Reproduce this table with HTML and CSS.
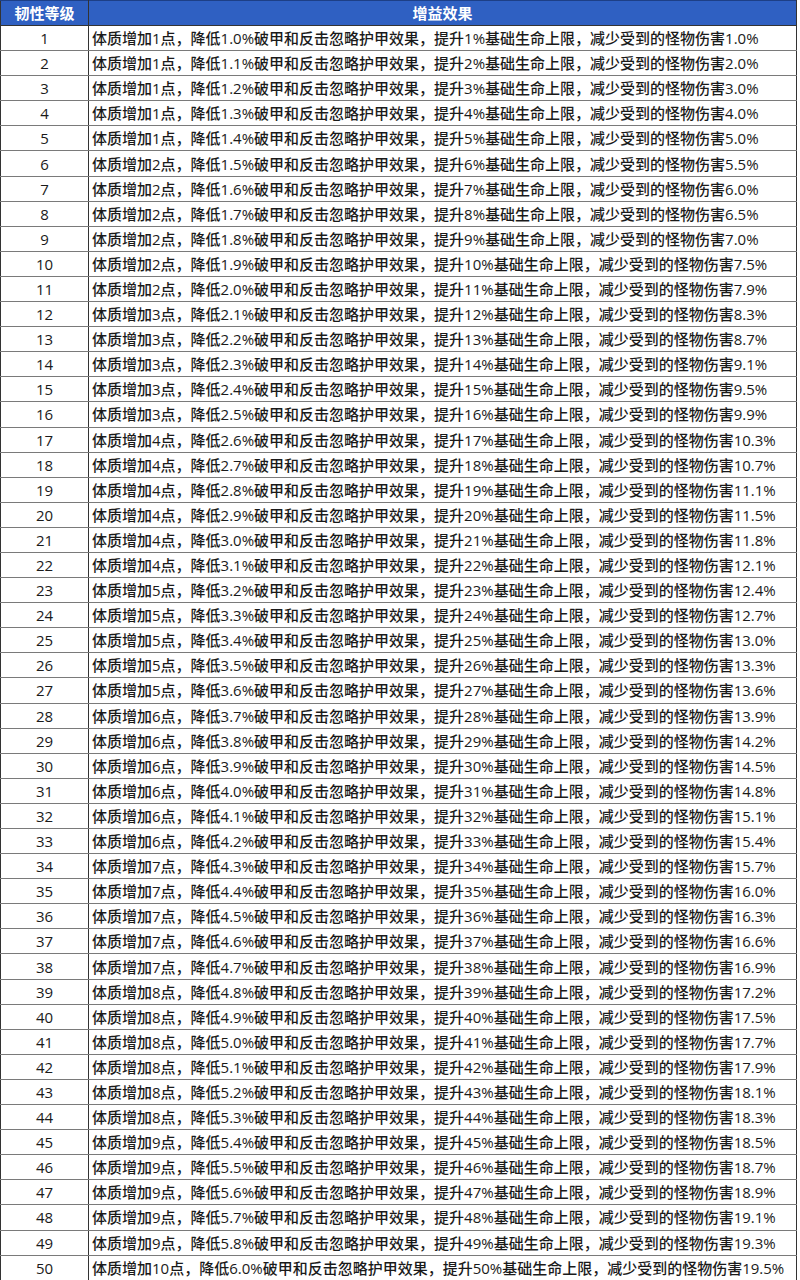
FILE: index.html
```html
<!DOCTYPE html>
<html lang="zh-CN">
<head>
<meta charset="utf-8">
<title>韧性等级</title>
<link rel="stylesheet" href="styles.css">
</head>
<body>
<table class="sheet">
<colgroup><col class="c-lv"><col class="c-fx"></colgroup>
<thead>
<tr class="head"><th>韧性等级</th><th>增益效果</th></tr>
</thead>
<tbody>
<tr><td class="lv">1</td><td class="fx">体质增加1点，降低1.0%破甲和反击忽略护甲效果，提升1%基础生命上限，减少受到的怪物伤害1.0%</td></tr>
<tr><td class="lv">2</td><td class="fx">体质增加1点，降低1.1%破甲和反击忽略护甲效果，提升2%基础生命上限，减少受到的怪物伤害2.0%</td></tr>
<tr><td class="lv">3</td><td class="fx">体质增加1点，降低1.2%破甲和反击忽略护甲效果，提升3%基础生命上限，减少受到的怪物伤害3.0%</td></tr>
<tr><td class="lv">4</td><td class="fx">体质增加1点，降低1.3%破甲和反击忽略护甲效果，提升4%基础生命上限，减少受到的怪物伤害4.0%</td></tr>
<tr><td class="lv">5</td><td class="fx">体质增加1点，降低1.4%破甲和反击忽略护甲效果，提升5%基础生命上限，减少受到的怪物伤害5.0%</td></tr>
<tr><td class="lv">6</td><td class="fx">体质增加2点，降低1.5%破甲和反击忽略护甲效果，提升6%基础生命上限，减少受到的怪物伤害5.5%</td></tr>
<tr><td class="lv">7</td><td class="fx">体质增加2点，降低1.6%破甲和反击忽略护甲效果，提升7%基础生命上限，减少受到的怪物伤害6.0%</td></tr>
<tr><td class="lv">8</td><td class="fx">体质增加2点，降低1.7%破甲和反击忽略护甲效果，提升8%基础生命上限，减少受到的怪物伤害6.5%</td></tr>
<tr><td class="lv">9</td><td class="fx">体质增加2点，降低1.8%破甲和反击忽略护甲效果，提升9%基础生命上限，减少受到的怪物伤害7.0%</td></tr>
<tr><td class="lv">10</td><td class="fx">体质增加2点，降低1.9%破甲和反击忽略护甲效果，提升10%基础生命上限，减少受到的怪物伤害7.5%</td></tr>
<tr><td class="lv">11</td><td class="fx">体质增加2点，降低2.0%破甲和反击忽略护甲效果，提升11%基础生命上限，减少受到的怪物伤害7.9%</td></tr>
<tr><td class="lv">12</td><td class="fx">体质增加3点，降低2.1%破甲和反击忽略护甲效果，提升12%基础生命上限，减少受到的怪物伤害8.3%</td></tr>
<tr><td class="lv">13</td><td class="fx">体质增加3点，降低2.2%破甲和反击忽略护甲效果，提升13%基础生命上限，减少受到的怪物伤害8.7%</td></tr>
<tr><td class="lv">14</td><td class="fx">体质增加3点，降低2.3%破甲和反击忽略护甲效果，提升14%基础生命上限，减少受到的怪物伤害9.1%</td></tr>
<tr><td class="lv">15</td><td class="fx">体质增加3点，降低2.4%破甲和反击忽略护甲效果，提升15%基础生命上限，减少受到的怪物伤害9.5%</td></tr>
<tr><td class="lv">16</td><td class="fx">体质增加3点，降低2.5%破甲和反击忽略护甲效果，提升16%基础生命上限，减少受到的怪物伤害9.9%</td></tr>
<tr><td class="lv">17</td><td class="fx">体质增加4点，降低2.6%破甲和反击忽略护甲效果，提升17%基础生命上限，减少受到的怪物伤害10.3%</td></tr>
<tr><td class="lv">18</td><td class="fx">体质增加4点，降低2.7%破甲和反击忽略护甲效果，提升18%基础生命上限，减少受到的怪物伤害10.7%</td></tr>
<tr><td class="lv">19</td><td class="fx">体质增加4点，降低2.8%破甲和反击忽略护甲效果，提升19%基础生命上限，减少受到的怪物伤害11.1%</td></tr>
<tr><td class="lv">20</td><td class="fx">体质增加4点，降低2.9%破甲和反击忽略护甲效果，提升20%基础生命上限，减少受到的怪物伤害11.5%</td></tr>
<tr><td class="lv">21</td><td class="fx">体质增加4点，降低3.0%破甲和反击忽略护甲效果，提升21%基础生命上限，减少受到的怪物伤害11.8%</td></tr>
<tr><td class="lv">22</td><td class="fx">体质增加4点，降低3.1%破甲和反击忽略护甲效果，提升22%基础生命上限，减少受到的怪物伤害12.1%</td></tr>
<tr><td class="lv">23</td><td class="fx">体质增加5点，降低3.2%破甲和反击忽略护甲效果，提升23%基础生命上限，减少受到的怪物伤害12.4%</td></tr>
<tr><td class="lv">24</td><td class="fx">体质增加5点，降低3.3%破甲和反击忽略护甲效果，提升24%基础生命上限，减少受到的怪物伤害12.7%</td></tr>
<tr><td class="lv">25</td><td class="fx">体质增加5点，降低3.4%破甲和反击忽略护甲效果，提升25%基础生命上限，减少受到的怪物伤害13.0%</td></tr>
<tr><td class="lv">26</td><td class="fx">体质增加5点，降低3.5%破甲和反击忽略护甲效果，提升26%基础生命上限，减少受到的怪物伤害13.3%</td></tr>
<tr><td class="lv">27</td><td class="fx">体质增加5点，降低3.6%破甲和反击忽略护甲效果，提升27%基础生命上限，减少受到的怪物伤害13.6%</td></tr>
<tr><td class="lv">28</td><td class="fx">体质增加6点，降低3.7%破甲和反击忽略护甲效果，提升28%基础生命上限，减少受到的怪物伤害13.9%</td></tr>
<tr><td class="lv">29</td><td class="fx">体质增加6点，降低3.8%破甲和反击忽略护甲效果，提升29%基础生命上限，减少受到的怪物伤害14.2%</td></tr>
<tr><td class="lv">30</td><td class="fx">体质增加6点，降低3.9%破甲和反击忽略护甲效果，提升30%基础生命上限，减少受到的怪物伤害14.5%</td></tr>
<tr><td class="lv">31</td><td class="fx">体质增加6点，降低4.0%破甲和反击忽略护甲效果，提升31%基础生命上限，减少受到的怪物伤害14.8%</td></tr>
<tr><td class="lv">32</td><td class="fx">体质增加6点，降低4.1%破甲和反击忽略护甲效果，提升32%基础生命上限，减少受到的怪物伤害15.1%</td></tr>
<tr><td class="lv">33</td><td class="fx">体质增加6点，降低4.2%破甲和反击忽略护甲效果，提升33%基础生命上限，减少受到的怪物伤害15.4%</td></tr>
<tr><td class="lv">34</td><td class="fx">体质增加7点，降低4.3%破甲和反击忽略护甲效果，提升34%基础生命上限，减少受到的怪物伤害15.7%</td></tr>
<tr><td class="lv">35</td><td class="fx">体质增加7点，降低4.4%破甲和反击忽略护甲效果，提升35%基础生命上限，减少受到的怪物伤害16.0%</td></tr>
<tr><td class="lv">36</td><td class="fx">体质增加7点，降低4.5%破甲和反击忽略护甲效果，提升36%基础生命上限，减少受到的怪物伤害16.3%</td></tr>
<tr><td class="lv">37</td><td class="fx">体质增加7点，降低4.6%破甲和反击忽略护甲效果，提升37%基础生命上限，减少受到的怪物伤害16.6%</td></tr>
<tr><td class="lv">38</td><td class="fx">体质增加7点，降低4.7%破甲和反击忽略护甲效果，提升38%基础生命上限，减少受到的怪物伤害16.9%</td></tr>
<tr><td class="lv">39</td><td class="fx">体质增加8点，降低4.8%破甲和反击忽略护甲效果，提升39%基础生命上限，减少受到的怪物伤害17.2%</td></tr>
<tr><td class="lv">40</td><td class="fx">体质增加8点，降低4.9%破甲和反击忽略护甲效果，提升40%基础生命上限，减少受到的怪物伤害17.5%</td></tr>
<tr><td class="lv">41</td><td class="fx">体质增加8点，降低5.0%破甲和反击忽略护甲效果，提升41%基础生命上限，减少受到的怪物伤害17.7%</td></tr>
<tr><td class="lv">42</td><td class="fx">体质增加8点，降低5.1%破甲和反击忽略护甲效果，提升42%基础生命上限，减少受到的怪物伤害17.9%</td></tr>
<tr><td class="lv">43</td><td class="fx">体质增加8点，降低5.2%破甲和反击忽略护甲效果，提升43%基础生命上限，减少受到的怪物伤害18.1%</td></tr>
<tr><td class="lv">44</td><td class="fx">体质增加8点，降低5.3%破甲和反击忽略护甲效果，提升44%基础生命上限，减少受到的怪物伤害18.3%</td></tr>
<tr><td class="lv">45</td><td class="fx">体质增加9点，降低5.4%破甲和反击忽略护甲效果，提升45%基础生命上限，减少受到的怪物伤害18.5%</td></tr>
<tr><td class="lv">46</td><td class="fx">体质增加9点，降低5.5%破甲和反击忽略护甲效果，提升46%基础生命上限，减少受到的怪物伤害18.7%</td></tr>
<tr><td class="lv">47</td><td class="fx">体质增加9点，降低5.6%破甲和反击忽略护甲效果，提升47%基础生命上限，减少受到的怪物伤害18.9%</td></tr>
<tr><td class="lv">48</td><td class="fx">体质增加9点，降低5.7%破甲和反击忽略护甲效果，提升48%基础生命上限，减少受到的怪物伤害19.1%</td></tr>
<tr><td class="lv">49</td><td class="fx">体质增加9点，降低5.8%破甲和反击忽略护甲效果，提升49%基础生命上限，减少受到的怪物伤害19.3%</td></tr>
<tr><td class="lv">50</td><td class="fx">体质增加10点，降低6.0%破甲和反击忽略护甲效果，提升50%基础生命上限，减少受到的怪物伤害19.5%</td></tr>
</tbody>
</table>
</body>
</html>
```

FILE: styles.css
```css
html, body {
  margin: 0;
  padding: 0;
  background: #ffffff;
  overflow: hidden;
}

.sheet {
  width: 796px;
  border-collapse: collapse;
  table-layout: fixed;
  font-family: "Segoe UI", "Open Sans", "Noto Sans CJK SC", sans-serif;
  font-size: 15px;
  font-weight: 500;
  color: #1a1a1a;
}

.c-lv { width: 88px; }
.c-fx { width: 708px; }

.head th {
  height: 24px;
  padding: 0;
  background: #2f60c2;
  color: #ffffff;
  font-family: "Noto Sans CJK SC", sans-serif;
  font-weight: 700;
  font-size: 15px;
  line-height: 20px;
  text-align: center;
  border-top: 1px solid #1d3f86;
  border-bottom: 1px solid #333333;
  border-left: 1px solid #333333;
  border-right: 1px solid #333333;
}

.sheet tbody tr {
  height: 25.1px;
}

.sheet td {
  padding: 0;
  border-bottom: 1px solid #7a7a7a;
  border-left: 1px solid #333333;
  border-right: 1px solid #333333;
  white-space: nowrap;
  line-height: 20px;
}

.lv {
  text-align: center;
}

.fx {
  text-align: left;
  padding-left: 3px !important;
  font-family: "Open Sans", "Noto Sans CJK SC", sans-serif;
}
```
